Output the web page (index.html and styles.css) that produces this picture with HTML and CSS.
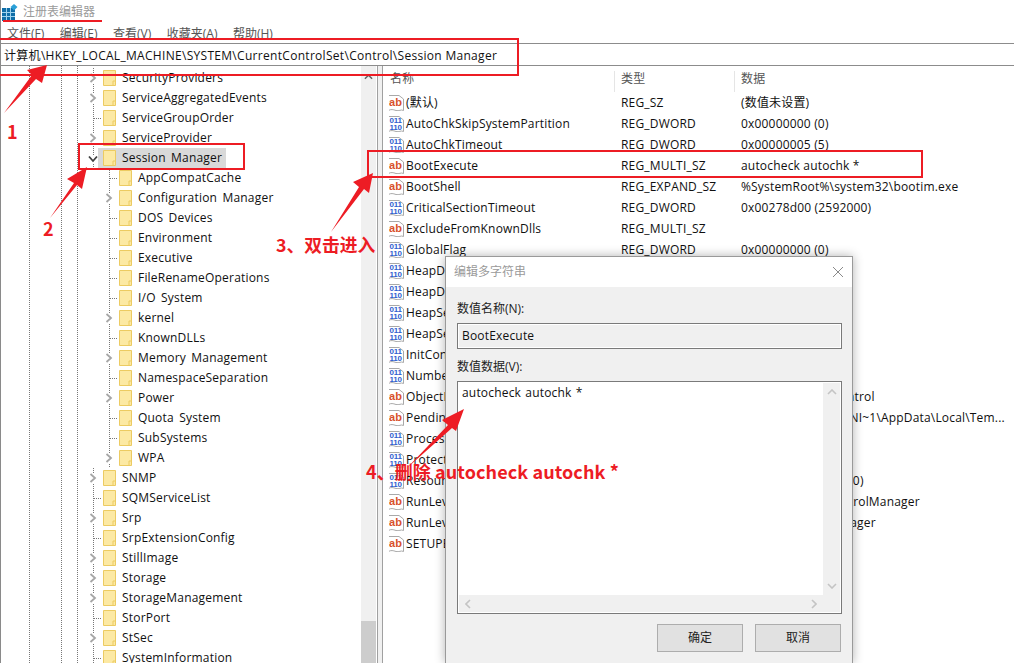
FILE: index.html
```html
<!DOCTYPE html>
<html lang="zh-CN">
<head>
<meta charset="utf-8">
<title>注册表编辑器</title>
<link rel="stylesheet" href="styles.css">
</head>
<body>
<svg class="defs" width="0" height="0" aria-hidden="true">
  <symbol id="ic-ab" viewBox="0 0 16 16">
    <path d="M.5.5H11L15.5 4V15.5C13 14 11 16.5 8 15.5S3 14 .5 15.5Z" fill="#fff" stroke="#a9a9a9"/>
    <text x="7.5" y="10.5" class="ic-ab-t">ab</text>
  </symbol>
  <symbol id="ic-bin" viewBox="0 0 16 16">
    <path d="M.5.5H11L15.5 4V15.5C13 14 11 16.5 8 15.5S3 14 .5 15.5Z" fill="#fff" stroke="#a9a9a9"/>
    <text x="7.7" y="7" class="ic-bin-t">011</text>
    <text x="7.7" y="13.5" class="ic-bin-t">110</text>
  </symbol>
  <symbol id="ic-folder" viewBox="0 0 13 16">
    <path d="M.5.5H12.5V15.5H.5Z" fill="#fce9a4" stroke="#eccb62"/>
    <path d="M10 15V11H12" fill="none" stroke="#eccb62"/>
  </symbol>
  <symbol id="ic-chev" viewBox="0 0 8 10">
    <path d="M1.5 1L6 5L1.5 9" fill="none" stroke="#a6a6a6" stroke-width="1.8"/>
  </symbol>
  <symbol id="ic-open" viewBox="0 0 10 8">
    <path d="M1 1.5L5 6L9 1.5" fill="none" stroke="#404040" stroke-width="1.8"/>
  </symbol>
</svg>

<div class="window">
  <header class="titlebar">
    <svg class="app-icon" viewBox="0 0 16 17" width="16" height="17">
      <rect x="0" y="4" width="13" height="13" fill="#0f6ea8"/>
      <path d="M4.5 4V17M8.5 4V17M0 8.5H13M0 12.5H13" stroke="#9fd3ee" stroke-width="1"/>
      <path d="M12 0L15.5 3L12 6.5L8.5 3Z" fill="#2aa0d8"/>
    </svg>
    <span class="app-title">注册表编辑器</span>
  </header>
  <nav class="menubar">
    <span>文件(F)</span><span>编辑(E)</span><span>查看(V)</span><span>收藏夹(A)</span><span>帮助(H)</span>
  </nav>
  <div class="address">计算机\HKEY_LOCAL_MACHINE\SYSTEM\CurrentControlSet\Control\Session Manager</div>

  <main class="panes">
    <section class="tree">
      <div class="tree-rows">
        <div class="row"><svg class="chev"><use href="#ic-chev"/></svg><svg class="folder"><use href="#ic-folder"/></svg><span>SecurityProviders</span></div>
        <div class="row"><svg class="chev"><use href="#ic-chev"/></svg><svg class="folder"><use href="#ic-folder"/></svg><span>ServiceAggregatedEvents</span></div>
        <div class="row"><i class="dots"></i><svg class="folder"><use href="#ic-folder"/></svg><span>ServiceGroupOrder</span></div>
        <div class="row"><svg class="chev"><use href="#ic-chev"/></svg><svg class="folder"><use href="#ic-folder"/></svg><span>ServiceProvider</span></div>
        <div class="row"><svg class="open"><use href="#ic-open"/></svg><div class="selected"><svg class="folder"><use href="#ic-folder"/></svg><span>Session Manager</span></div></div>
        <div class="row child"><i class="dots"></i><svg class="folder"><use href="#ic-folder"/></svg><span>AppCompatCache</span></div>
        <div class="row child"><svg class="chev"><use href="#ic-chev"/></svg><svg class="folder"><use href="#ic-folder"/></svg><span>Configuration Manager</span></div>
        <div class="row child"><i class="dots"></i><svg class="folder"><use href="#ic-folder"/></svg><span>DOS Devices</span></div>
        <div class="row child"><i class="dots"></i><svg class="folder"><use href="#ic-folder"/></svg><span>Environment</span></div>
        <div class="row child"><i class="dots"></i><svg class="folder"><use href="#ic-folder"/></svg><span>Executive</span></div>
        <div class="row child"><i class="dots"></i><svg class="folder"><use href="#ic-folder"/></svg><span>FileRenameOperations</span></div>
        <div class="row child"><i class="dots"></i><svg class="folder"><use href="#ic-folder"/></svg><span>I/O System</span></div>
        <div class="row child"><svg class="chev"><use href="#ic-chev"/></svg><svg class="folder"><use href="#ic-folder"/></svg><span>kernel</span></div>
        <div class="row child"><i class="dots"></i><svg class="folder"><use href="#ic-folder"/></svg><span>KnownDLLs</span></div>
        <div class="row child"><svg class="chev"><use href="#ic-chev"/></svg><svg class="folder"><use href="#ic-folder"/></svg><span>Memory Management</span></div>
        <div class="row child"><i class="dots"></i><svg class="folder"><use href="#ic-folder"/></svg><span>NamespaceSeparation</span></div>
        <div class="row child"><svg class="chev"><use href="#ic-chev"/></svg><svg class="folder"><use href="#ic-folder"/></svg><span>Power</span></div>
        <div class="row child"><i class="dots"></i><svg class="folder"><use href="#ic-folder"/></svg><span>Quota System</span></div>
        <div class="row child"><i class="dots"></i><svg class="folder"><use href="#ic-folder"/></svg><span>SubSystems</span></div>
        <div class="row child"><svg class="chev"><use href="#ic-chev"/></svg><svg class="folder"><use href="#ic-folder"/></svg><span>WPA</span></div>
        <div class="row"><svg class="chev"><use href="#ic-chev"/></svg><svg class="folder"><use href="#ic-folder"/></svg><span>SNMP</span></div>
        <div class="row"><i class="dots"></i><svg class="folder"><use href="#ic-folder"/></svg><span>SQMServiceList</span></div>
        <div class="row"><svg class="chev"><use href="#ic-chev"/></svg><svg class="folder"><use href="#ic-folder"/></svg><span>Srp</span></div>
        <div class="row"><i class="dots"></i><svg class="folder"><use href="#ic-folder"/></svg><span>SrpExtensionConfig</span></div>
        <div class="row"><svg class="chev"><use href="#ic-chev"/></svg><svg class="folder"><use href="#ic-folder"/></svg><span>StillImage</span></div>
        <div class="row"><svg class="chev"><use href="#ic-chev"/></svg><svg class="folder"><use href="#ic-folder"/></svg><span>Storage</span></div>
        <div class="row"><svg class="chev"><use href="#ic-chev"/></svg><svg class="folder"><use href="#ic-folder"/></svg><span>StorageManagement</span></div>
        <div class="row"><i class="dots"></i><svg class="folder"><use href="#ic-folder"/></svg><span>StorPort</span></div>
        <div class="row"><svg class="chev"><use href="#ic-chev"/></svg><svg class="folder"><use href="#ic-folder"/></svg><span>StSec</span></div>
        <div class="row"><i class="dots"></i><svg class="folder"><use href="#ic-folder"/></svg><span>SystemInformation</span></div>
      </div>
      <div class="tree-scroll">
        <svg class="scroll-up" viewBox="0 0 10 6"><path d="M1 5L5 1L9 5" fill="none" stroke="#606060" stroke-width="1.6"/></svg>
        <div class="tree-thumb"></div>
      </div>
    </section>

    <div class="splitter"></div>

    <section class="list">
      <div class="list-head">
        <div class="col-name">名称</div>
        <div class="col-type">类型</div>
        <div class="col-data">数据</div>
      </div>
      <div class="list-row"><div class="col-name"><svg class="ic"><use href="#ic-ab"/></svg>(默认)</div><div class="col-type">REG_SZ</div><div class="col-data">(数值未设置)</div></div>
      <div class="list-row"><div class="col-name"><svg class="ic"><use href="#ic-bin"/></svg>AutoChkSkipSystemPartition</div><div class="col-type">REG_DWORD</div><div class="col-data">0x00000000 (0)</div></div>
      <div class="list-row"><div class="col-name"><svg class="ic"><use href="#ic-bin"/></svg>AutoChkTimeout</div><div class="col-type">REG_DWORD</div><div class="col-data">0x00000005 (5)</div></div>
      <div class="list-row"><div class="col-name"><svg class="ic"><use href="#ic-ab"/></svg>BootExecute</div><div class="col-type">REG_MULTI_SZ</div><div class="col-data">autocheck autochk *</div></div>
      <div class="list-row"><div class="col-name"><svg class="ic"><use href="#ic-ab"/></svg>BootShell</div><div class="col-type">REG_EXPAND_SZ</div><div class="col-data">%SystemRoot%\system32\bootim.exe</div></div>
      <div class="list-row"><div class="col-name"><svg class="ic"><use href="#ic-bin"/></svg>CriticalSectionTimeout</div><div class="col-type">REG_DWORD</div><div class="col-data">0x00278d00 (2592000)</div></div>
      <div class="list-row"><div class="col-name"><svg class="ic"><use href="#ic-ab"/></svg>ExcludeFromKnownDlls</div><div class="col-type">REG_MULTI_SZ</div><div class="col-data"></div></div>
      <div class="list-row"><div class="col-name"><svg class="ic"><use href="#ic-bin"/></svg>GlobalFlag</div><div class="col-type">REG_DWORD</div><div class="col-data">0x00000000 (0)</div></div>
      <div class="list-row"><div class="col-name"><svg class="ic"><use href="#ic-bin"/></svg>HeapDeCommitFreeBlockThreshold</div><div class="col-type">REG_DWORD</div><div class="col-data">0x00000000 (0)</div></div>
      <div class="list-row"><div class="col-name"><svg class="ic"><use href="#ic-bin"/></svg>HeapDeCommitTotalFreeThreshold</div><div class="col-type">REG_DWORD</div><div class="col-data">0x00000000 (0)</div></div>
      <div class="list-row"><div class="col-name"><svg class="ic"><use href="#ic-bin"/></svg>HeapSegmentCommit</div><div class="col-type">REG_DWORD</div><div class="col-data">0x00000000 (0)</div></div>
      <div class="list-row"><div class="col-name"><svg class="ic"><use href="#ic-bin"/></svg>HeapSegmentReserve</div><div class="col-type">REG_DWORD</div><div class="col-data">0x00000000 (0)</div></div>
      <div class="list-row"><div class="col-name"><svg class="ic"><use href="#ic-bin"/></svg>InitConsoleLocale</div><div class="col-type">REG_DWORD</div><div class="col-data">0x00000000 (0)</div></div>
      <div class="list-row"><div class="col-name"><svg class="ic"><use href="#ic-bin"/></svg>NumberOfInitialSessions</div><div class="col-type">REG_DWORD</div><div class="col-data">0x00000002 (2)</div></div>
      <div class="list-row"><div class="col-name"><svg class="ic"><use href="#ic-ab"/></svg>ObjectDirectories</div><div class="col-type">REG_MULTI_SZ</div><div class="col-data">\Windows \RPC Control</div></div>
      <div class="list-row"><div class="col-name"><svg class="ic"><use href="#ic-ab"/></svg>PendingFileRenameOperations</div><div class="col-type">REG_MULTI_SZ</div><div class="col-data">\\??\C:\Users\ADMINI~1\AppData\Local\Tem...</div></div>
      <div class="list-row"><div class="col-name"><svg class="ic"><use href="#ic-bin"/></svg>ProcessorControl</div><div class="col-type">REG_DWORD</div><div class="col-data">0x00000002 (2)</div></div>
      <div class="list-row"><div class="col-name"><svg class="ic"><use href="#ic-bin"/></svg>ProtectionMode</div><div class="col-type">REG_DWORD</div><div class="col-data">0x00000001 (1)</div></div>
      <div class="list-row"><div class="col-name"><svg class="ic"><use href="#ic-bin"/></svg>ResourcePolicies</div><div class="col-type">REG_DWORD</div><div class="col-data">0x0002a300 (172800)</div></div>
      <div class="list-row"><div class="col-name"><svg class="ic"><use href="#ic-ab"/></svg>RunLevelExecute</div><div class="col-type">REG_MULTI_SZ</div><div class="col-data">WinInit ServiceControlManager</div></div>
      <div class="list-row"><div class="col-name"><svg class="ic"><use href="#ic-ab"/></svg>RunLevelValidate</div><div class="col-type">REG_MULTI_SZ</div><div class="col-data">ServiceControlManager</div></div>
      <div class="list-row"><div class="col-name"><svg class="ic"><use href="#ic-ab"/></svg>SETUPEXECUTE</div><div class="col-type">REG_MULTI_SZ</div><div class="col-data"></div></div>
    </section>
  </main>
</div>

<aside class="dialog">
  <div class="dialog-title">
    <span>编辑多字符串</span>
    <svg class="dialog-close" viewBox="0 0 12 12"><path d="M1 1L11 11M11 1L1 11" fill="none" stroke="#8a8a8a" stroke-width="1"/></svg>
  </div>
  <div class="dialog-body">
    <label class="dialog-label">数值名称(N):</label>
    <div class="dialog-input"><span>BootExecute</span></div>
    <label class="dialog-label second">数值数据(V):</label>
    <div class="dialog-text">
      <div class="dialog-value">autocheck autochk *</div>
      <div class="sb-v">
        <svg viewBox="0 0 10 6"><path d="M1 5L5 1L9 5" fill="none" stroke="#c4c4c4" stroke-width="1.6"/></svg>
        <svg viewBox="0 0 10 6"><path d="M1 1L5 5L9 1" fill="none" stroke="#c4c4c4" stroke-width="1.6"/></svg>
      </div>
      <div class="sb-h">
        <svg viewBox="0 0 6 10"><path d="M5 1L1 5L5 9" fill="none" stroke="#c4c4c4" stroke-width="1.6"/></svg>
        <svg viewBox="0 0 6 10"><path d="M1 1L5 5L1 9" fill="none" stroke="#c4c4c4" stroke-width="1.6"/></svg>
      </div>
      <div class="sb-corner"></div>
    </div>
    <div class="dialog-actions">
      <button class="btn">确定</button>
      <button class="btn">取消</button>
    </div>
  </div>
</aside>

<div class="mark box-title"></div>
<div class="mark box-address"></div>
<div class="mark box-session"></div>
<div class="mark box-boot"></div>
<svg class="arrows" viewBox="0 0 1014 663" width="1014" height="663" aria-hidden="true">
  <path d="M4 113L32 75L27 70L47 65L42 83L36 79Z"/>
  <path d="M50 218L74 183L67 179L87 167L82 189L77 185Z"/>
  <path d="M331 232L359 187L353 182L373 173L369 193L364 189Z"/>
  <path d="M407 468L448 425L442 420L464 409L456 431L452 428Z"/>
</svg>
<div class="note note-1">1</div>
<div class="note note-2">2</div>
<div class="note note-3">3、双击进入</div>
<div class="note note-4">4、删除 autocheck autochk *</div>
</body>
</html>
```
FILE: styles.css
```css
* { box-sizing: border-box; }
html, body { margin: 0; height: 100%; }
body {
  width: 1014px;
  height: 663px;
  overflow: hidden;
  position: relative;
  background: #fff;
  color: #101010;
  font: 12px/16px "Open Sans", "Noto Sans CJK SC", sans-serif;
}
.defs { position: absolute; }
.window {
  height: 663px;
  display: flex;
  flex-direction: column;
  border-left: 1px solid #8a8a8a;
}

/* title + menu */
.titlebar { height: 23px; display: flex; align-items: center; padding: 0 0 0 1px; gap: 5px; flex: none; }
.app-icon { flex: none; margin-top: 2px; }
.app-title { color: #9a9a9a; font-size: 12px; }
.menubar { height: 20px; flex: none; display: flex; gap: 15.5px; padding: 3px 0 0 6px; color: #555; }
.address {
  height: 23px; flex: none;
  border-top: 1px solid #8c8c8c;
  border-bottom: 1px solid #8c8c8c;
  padding: 4px 0 0 4px;
  white-space: nowrap;
  margin-left: -1px;
  color: #111;
  letter-spacing: .3px;
}

/* panes */
.panes { flex: 1; min-height: 0; display: flex; }
.tree { width: 376px; flex: none; display: flex; overflow: hidden; }
.tree-rows {
  width: 359px; flex: none; padding-top: 2px;
  letter-spacing: .2px;
  word-spacing: 2px;
  background:
    repeating-linear-gradient(to bottom, #777 0 1px, transparent 1px 2px) 28px 0 / 1px 100% no-repeat,
    repeating-linear-gradient(to bottom, #777 0 1px, transparent 1px 2px) 60px 0 / 1px 100% no-repeat,
    repeating-linear-gradient(to bottom, #777 0 1px, transparent 1px 2px) 76px 0 / 1px 100% no-repeat;
}
.row {
  height: 20px; display: flex; align-items: center; padding-left: 88px; white-space: nowrap;
  background: repeating-linear-gradient(to bottom, #777 0 1px, transparent 1px 2px) 92px 0 / 1px 100% no-repeat;
}
.row.child {
  padding-left: 104px;
  background: repeating-linear-gradient(to bottom, #777 0 1px, transparent 1px 2px) 108px 0 / 1px 100% no-repeat;
}
.chev { width: 8px; height: 10px; flex: none; margin-right: 6px; background: #fff; }
.open { width: 10px; height: 8px; flex: none; margin-left: -1px; margin-top: 1px; background: #fff; }
.dots { width: 14px; height: 1px; flex: none; background: repeating-linear-gradient(to right, #777 0 1px, transparent 1px 2px) 5px 0 / 7px 1px no-repeat; }
.folder { width: 13px; height: 16px; flex: none; margin-right: 6px; }
.selected { display: flex; align-items: center; height: 20px; width: 128px; background: #d9d9d9; padding-left: 5px; }
.tree-scroll { width: 15px; flex: none; background: #f0f0f0; position: relative; margin-left: 1px; }
.scroll-up { position: absolute; left: 3px; top: 8px; width: 9px; height: 6px; }
.tree-thumb { position: absolute; left: 0; right: 0; bottom: 0; height: 42px; background: #cdcdcd; }
.splitter { width: 6px; flex: none; background: #f0f0f0; border-left: 1px solid #a0a0a0; border-right: 1px solid #a0a0a0; }

.list { flex: 1; min-width: 0; overflow: hidden; padding-left: 6px; letter-spacing: .18px; }
.list-head { height: 26px; display: flex; color: #555; padding-top: 5px; }
.list-head .col-name { padding-left: 1px; border-right: 1px solid #e5e5e5; height: 21px; align-items: flex-start; }
.list-head .col-type { border-right: 1px solid #e5e5e5; height: 21px; padding-left: 6px; }
.list-head .col-data { padding-left: 6px; }
.list-row { height: 21px; display: flex; align-items: center; white-space: nowrap; }
.col-name { width: 226px; flex: none; display: flex; align-items: center; overflow: hidden; }
.col-type { width: 120px; flex: none; padding-left: 6px; overflow: hidden; }
.col-data { flex: 1; padding-left: 6px; white-space: nowrap; }
.ic { width: 16px; height: 16px; flex: none; margin-right: 2px; margin-left: -1px; }
.ic-ab-t { font: bold 11px "Liberation Sans", sans-serif; fill: #d8512c; text-anchor: middle; }
.ic-bin-t { font: bold 8px "Liberation Sans", sans-serif; fill: #2f5fcf; text-anchor: middle; letter-spacing: -.2px; }

/* dialog */
.dialog {
  position: absolute; left: 445px; top: 256px; width: 408px; height: 407px;
  background: #f0f0f0;
  border: 1px solid #9a9a9a;
  border-bottom: 0;
  box-shadow: 0 0 10px rgba(0,0,0,.3);
  display: flex; flex-direction: column;
}
.dialog-title {
  height: 30px; flex: none; background: #fff;
  display: flex; align-items: center; justify-content: space-between;
  padding: 0 8px 0 8px; color: #9a9a9a;
}
.dialog-close { width: 12px; height: 12px; }
.dialog-body { flex: 1; padding: 14px 10px 0 11px; display: flex; flex-direction: column; }
.dialog-label { display: block; height: 16px; color: #222; }
.dialog-label.second { margin-top: 10px; }
.dialog-input {
  margin-top: 6px; height: 26px; flex: none;
  border: 1px solid #7a7a7a; box-shadow: inset 0 0 0 1px #fff; background: #f0f0f0;
  display: flex; align-items: center; padding-left: 4px; color: #111;
  letter-spacing: .18px;
}
.dialog-text {
  margin-top: 6px; height: 233px; flex: none;
  border: 1px solid #7a7a7a; background: #fff; padding: 1px;
  display: grid; grid-template-columns: 1fr 17px; grid-template-rows: 1fr 17px;
}
.dialog-value { padding: 2px 3px; color: #111; letter-spacing: .18px; word-spacing: 1px; }
.sb-v { background: #f0f0f0; display: flex; flex-direction: column; justify-content: space-between; align-items: center; padding: 6px 0; }
.sb-v svg { width: 10px; height: 6px; }
.sb-h { background: #f0f0f0; display: flex; justify-content: space-between; align-items: center; padding: 0 6px; }
.sb-h svg { width: 6px; height: 10px; }
.sb-corner { background: #f0f0f0; }
.dialog-actions { display: flex; justify-content: flex-end; gap: 12px; margin: 10px 1px 0 0; }
.btn {
  width: 86px; height: 28px; background: #e1e1e1; border: 1px solid #adadad; border-radius: 0;
  font: inherit; color: #222; padding: 0;
}

/* annotations */
.mark { position: absolute; border: 2px solid #ed1c24; pointer-events: none; }
.box-title { left: 3px; top: 20px; width: 99px; height: 2px; border-width: 2px 0 0; }
.box-address { left: -3px; top: 38px; width: 522px; height: 38px; }
.box-session { left: 78px; top: 143px; width: 167px; height: 27px; }
.box-boot { left: 367px; top: 150px; width: 556px; height: 28px; }
.arrows { position: absolute; left: 0; top: 0; fill: #ed1c24; pointer-events: none; }
.note { position: absolute; color: #ed1c24; font-weight: 700; white-space: nowrap; font-family: "Noto Sans CJK SC", "Noto Sans", sans-serif; }
.note-1 { left: 7px; top: 119px; font-size: 18px; line-height: 24px; }
.note-2 { left: 43px; top: 216px; font-size: 18px; line-height: 24px; }
.note-3 { left: 276px; top: 232px; font-size: 17.8px; line-height: 24px; }
.note-4 { left: 366px; top: 459px; font-size: 18px; line-height: 24px; letter-spacing: .08px; }
```
